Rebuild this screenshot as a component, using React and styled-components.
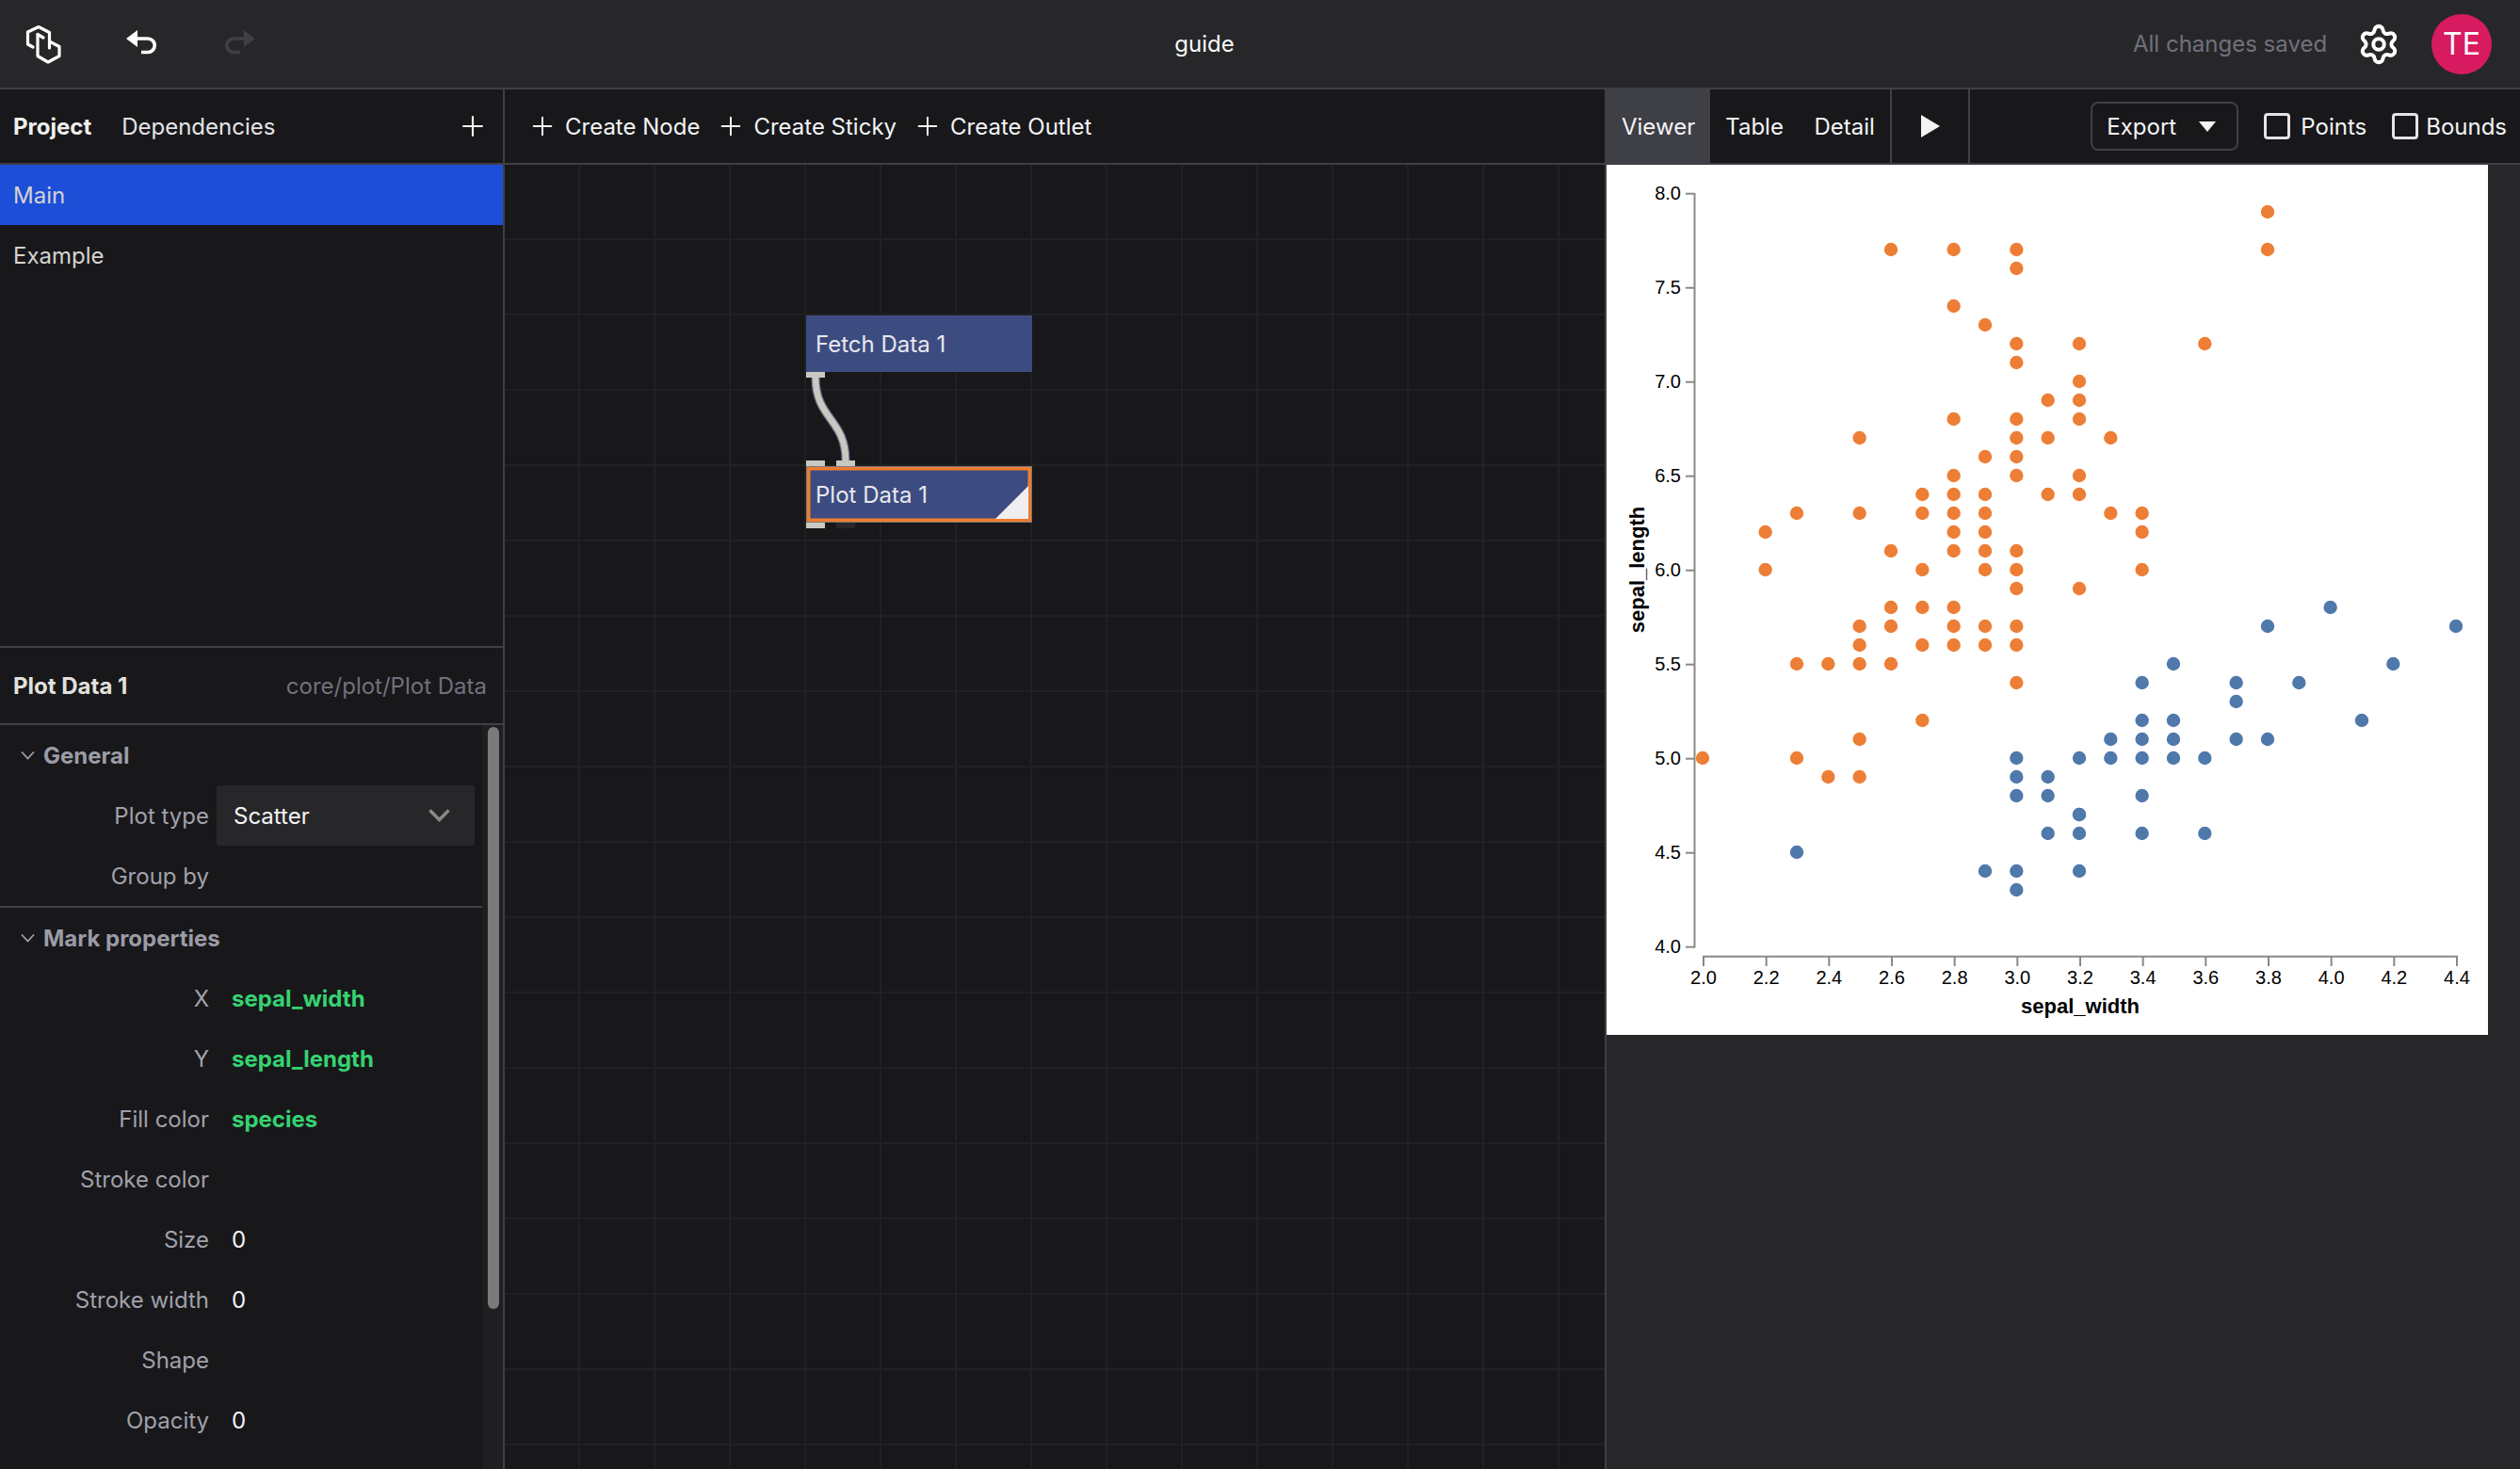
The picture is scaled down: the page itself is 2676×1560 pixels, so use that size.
import React from "react";
import styled, { createGlobalStyle } from "styled-components";
import { Plus, Settings } from "lucide-react";

const Global = createGlobalStyle`
  html, body { margin: 0; padding: 0; background: #18181b; }
  body { font-family: Inter, "Liberation Sans", sans-serif; }
  * { box-sizing: border-box; }
`;

const Shell = styled.div`
  width: 2676px; height: 1560px; display: flex; flex-direction: column; overflow: hidden;
  background: #18181b; color: #e4e4e7; font-size: 24px;
`;
const Header = styled.header`
  height: 95px; flex: none; display: flex; align-items: center; background: #27272a; border-bottom: 2px solid #3f3f46;
`;
const HeaderLeft = styled.div`
  width: 293px; padding-left: 26px; display: flex; align-items: center; gap: 67px;
`;
const Title = styled.div`flex: 1; text-align: center; color: #fafafa; font-size: 24px;`;
const HeaderRight = styled.div`
  width: 411px; padding-right: 30px; display: flex; align-items: center;
`;
const Saved = styled.span`color: #71717a; font-size: 24px; white-space: nowrap;`;
const GearWrap = styled.span`display: flex; margin-left: 32px; color: #fff;`;
const Avatar = styled.div`
  width: 64px; height: 64px; margin-left: auto; border-radius: 50%; background: #d81b60; color: #fff; font-size: 32px;
  display: flex; align-items: center; justify-content: center;
`;
const Hist = styled.svg`display: block; transform: ${p => (p.$flip ? "scaleX(-1)" : "none")};`;

const Body = styled.div`flex: 1; min-height: 0; display: flex;`;

const Left = styled.aside`
  width: 536px; flex: none; display: flex; flex-direction: column; border-right: 2px solid #3f3f46;
`;
const Bar = styled.div`
  height: 80px; flex: none; display: flex; align-items: center; border-bottom: 2px solid #3f3f46;
`;
const LeftTab = styled.span`
  font-weight: ${p => (p.$on ? 700 : 400)}; color: ${p => (p.$on ? "#f0efec" : "#e4e4e7")};
  margin-left: ${p => p.$ml}px;
`;
const AddBtn = styled.span`display: flex; margin-left: auto; margin-right: 15px; color: #f4f4f5;`;
const Pages = styled.div`flex: 1; min-height: 0;`;
const Page = styled.div`
  height: 64px; padding-left: 14px; display: flex; align-items: center; color: #d6d3d1;
  background: ${p => (p.$on ? "#1d4ed8" : "transparent")};
`;
const InspectorHead = styled.div`
  height: 84px; flex: none; padding: 0 17px 0 14px; display: flex; align-items: center; justify-content: space-between;
  border-top: 2px solid #3f3f46; border-bottom: 2px solid #3f3f46;
`;
const NodeName = styled.span`font-weight: 700; color: #e2e1dc;`;
const NodePath = styled.span`color: #71717a;`;
const InspectorBody = styled.div`flex: none; height: 790px; display: flex; overflow: hidden;`;
const Fields = styled.div`flex: 1; min-width: 0;`;
const Track = styled.div`width: 22px; flex: none; padding: 2px 4px 0 6px; background: #1f1f22;`;
const Thumb = styled.div`height: 618px; border-radius: 6px; background: #7a7a7a;`;
const SectionHead = styled.div`
  height: 64px; display: flex; align-items: center; font-weight: 700; color: #9c9ca6;
  padding-left: 22px;
`;
const Chevron = styled.svg`display: block; margin-right: 9px; flex: none;`;
const Row = styled.div`
  height: 64px; display: grid; grid-template-columns: 222px 1fr; column-gap: 8px; align-items: center;
`;
const Label = styled.span`text-align: right; color: #a1a1aa; white-space: nowrap;`;
const Value = styled.span`
  padding-left: 16px; color: ${p => (p.$bound ? "#36d271" : "#f4f4f5")}; font-weight: ${p => (p.$bound ? 700 : 400)};
`;
const Select = styled.div`
  width: 274px; height: 64px; padding: 0 26px 0 18px; display: flex; align-items: center; justify-content: space-between;
  background: #27272a; border-radius: 3px; color: #f4f4f5;
`;
const SelectArrow = styled.svg`display: block; flex: none;`;
const Divider = styled.div`height: 2px; background: #3f3f46;`;

const Center = styled.main`width: 1168px; flex: none; display: flex; flex-direction: column;`;
const CreateBtn = styled.span`
  display: flex; align-items: center; gap: 8px; color: #f4f4f5; white-space: nowrap; margin-left: ${p => p.$ml}px;
`;
const Canvas = styled.div`
  position: relative; flex: 1; min-height: 0; overflow: hidden;
  background-color: #18181b;
  background-image:
    linear-gradient(to right, #212124 2px, transparent 2px),
    linear-gradient(to bottom, #212124 2px, transparent 2px);
  background-size: 80px 80px;
  background-position: 78px 78px;
`;
const Node = styled.div`
  position: absolute; left: ${p => p.$x}px; top: ${p => p.$y}px; width: 240px; height: ${p => p.$h}px;
  background: #3d4c80; color: #e8e8ee; display: flex; align-items: center; padding-left: 10px; font-size: 24px;
  ${p => p.$sel && `border: 1px solid #7a7a7a; padding-left: 9px; box-shadow: inset 0 0 0 3.5px #ee7d2f;`}
`;
const Corner = styled.div`
  position: absolute; right: 3px; bottom: 3px; width: 35px; height: 35px; background: #efeff1;
  clip-path: polygon(100% 0, 100% 100%, 0 100%);
`;
const Port = styled.div`
  position: absolute; left: ${p => p.$x}px; top: ${p => p.$y}px; width: 20px; height: 6px;
  background: ${p => (p.$on ? "#c9c8c1" : "#27272a")};
`;
const Edge = styled.svg`position: absolute; left: 320px; top: 220px; display: block;`;

const Right = styled.section`width: 972px; flex: none; display: flex; flex-direction: column;`;
const ViewTab = styled.div`
  height: 100%; padding: 0 ${p => p.$pr}px 0 ${p => p.$pl}px; display: flex; align-items: center; color: #f4f4f5;
  background: ${p => (p.$on ? "#3f3f46" : "transparent")};
`;
const PlayCell = styled.div`
  width: 85px; height: 100%; display: flex; align-items: center; justify-content: center;
  border-left: 2px solid #3f3f46; border-right: 2px solid #3f3f46;
`;
const PlayIcon = styled.svg`display: block;`;
const ExportBtn = styled.div`
  width: 157px; height: 52px; margin-left: auto; padding: 0 22px 0 15px; display: flex; align-items: center; justify-content: space-between;
  border: 2px solid #3f3f46; border-radius: 8px; color: #f4f4f5;
`;
const Check = styled.span`
  width: 28px; height: 28px; flex: none; margin-left: ${p => p.$ml}px; margin-right: ${p => p.$mr}px;
  border: 3.5px solid #e4e4e7; border-radius: 4px;
`;
const CheckLabel = styled.span`color: #f4f4f5; margin-right: ${p => p.$mr || 0}px;`;
const Stage = styled.div`
  flex: 1; min-height: 0; background: #27272a; border-left: 2px solid #3f3f46;
`;
const Plot = styled.div`width: 936px; height: 924px; background: #fff;`;
const ChartSvg = styled.svg`display: block; font-family: "Liberation Sans", Arial, sans-serif;`;
const LogoSvg = styled.svg`display: block;`;

const setosa = "5.1,3.5 4.9,3.0 4.7,3.2 4.6,3.1 5.0,3.6 5.4,3.9 4.6,3.4 5.0,3.4 4.4,2.9 4.9,3.1 5.4,3.7 4.8,3.4 4.8,3.0 4.3,3.0 5.8,4.0 5.7,4.4 5.7,3.8 5.1,3.8 5.4,3.4 5.1,3.7 4.6,3.6 5.1,3.3 5.0,3.0 5.2,3.5 5.2,3.4 4.7,3.2 4.8,3.1 5.2,4.1 5.5,4.2 5.0,3.2 5.5,3.5 4.4,3.0 5.1,3.4 5.0,3.5 4.5,2.3 4.4,3.2 4.6,3.2 5.3,3.7 5.0,3.3";
const others = "7.0,3.2 6.4,3.2 6.9,3.1 5.5,2.3 6.5,2.8 5.7,2.8 6.3,3.3 4.9,2.4 6.6,2.9 5.2,2.7 5.0,2.0 5.9,3.0 6.0,2.2 6.1,2.9 5.6,2.9 6.7,3.1 5.6,3.0 5.8,2.7 6.2,2.2 5.6,2.5 5.9,3.2 6.1,2.8 6.3,2.5 6.4,2.9 6.6,3.0 6.8,2.8 6.7,3.0 6.0,2.9 5.7,2.6 5.5,2.4 6.0,2.7 5.4,3.0 6.0,3.4 6.3,2.3 5.5,2.5 5.5,2.6 6.1,3.0 5.8,2.6 5.0,2.3 5.6,2.7 5.7,3.0 5.7,2.9 6.2,2.9 5.1,2.5 7.1,3.0 6.3,2.9 6.5,3.0 7.6,3.0 4.9,2.5 7.3,2.9 6.7,2.5 7.2,3.6 6.5,3.2 6.4,2.7 6.8,3.0 5.7,2.5 5.8,2.8 7.7,3.8 7.7,2.6 6.9,3.2 5.6,2.8 7.7,2.8 6.3,2.7 6.7,3.3 7.2,3.2 6.2,2.8 6.4,2.8 7.2,3.0 7.4,2.8 7.9,3.8 6.3,2.8 6.1,2.6 7.7,3.0 6.3,3.4 6.4,3.1 6.0,3.0 6.8,3.2 6.2,3.4";
const parse = s => s.split(" ").map(p => p.split(",").map(Number));

const px = w => 102 + (w - 2) * 333.33;
const py = l => 630 - (l - 5) * 200;
const xTicks = [2.0, 2.2, 2.4, 2.6, 2.8, 3.0, 3.2, 3.4, 3.6, 3.8, 4.0, 4.2, 4.4];
const yTicks = [8.0, 7.5, 7.0, 6.5, 6.0, 5.5, 5.0, 4.5, 4.0];

function Chart() {
  return (
    <ChartSvg width="936" height="924" viewBox="0 0 936 924">
      <line x1="93.5" x2="93.5" y1="30" y2="831.5" stroke="#888" strokeWidth="2" />
      {yTicks.map(t => (
        <g key={t}>
          <line x1="84" x2="93" y1={py(t) + 0.7} y2={py(t) + 0.7} stroke="#888" strokeWidth="2" />
          <text x="79" y={py(t) + 7.2} textAnchor="end" fontSize="20" fill="#000">{t.toFixed(1)}</text>
        </g>
      ))}
      <line x1="102" x2="904" y1="840.7" y2="840.7" stroke="#888" strokeWidth="2" />
      {xTicks.map(t => (
        <g key={t}>
          <line x1={px(t) + 1} x2={px(t) + 1} y1="841" y2="851" stroke="#888" strokeWidth="2" />
          <text x={px(t) + 1} y="870" textAnchor="middle" fontSize="20" fill="#000">{t.toFixed(1)}</text>
        </g>
      ))}
      <text x="503" y="900.5" textAnchor="middle" fontSize="22" fontWeight="700" fill="#000">sepal_width</text>
      <text transform="translate(39.5 430) rotate(-90)" textAnchor="middle" fontSize="22" fontWeight="700" fill="#000">sepal_length</text>
      {parse(setosa).map(([l, w], i) => <circle key={`s${i}`} cx={px(w)} cy={py(l)} r="7.2" fill="#4f78ab" />)}
      {parse(others).map(([l, w], i) => <circle key={`o${i}`} cx={px(w)} cy={py(l)} r="7.2" fill="#ed7e35" />)}
    </ChartSvg>
  );
}

const Logo = () => (
  <LogoSvg width="40" height="44" viewBox="26 24 40 44" fill="none" stroke="#fff" strokeWidth="3.2" strokeLinejoin="round" strokeLinecap="round">
    <path d="M35 49 L29.5 46 V33 L41 27.5 L52.5 33.5 V43 L63 48.5 V58.5 L51 65 L40 58.5 V35.5" />
    <path d="M40 35.5 L46 39 M52.5 43 V50" />
  </LogoSvg>
);

const HistIcon = ({ color, flip }) => (
  <Hist $flip={flip} width="36" height="32" viewBox="0 0 36 32" fill="none">
    <path d="M1 10 L13 1 V19 Z" fill={color} />
    <path d="M12 10 H24 a7.25 7.25 0 0 1 0 14.5 H17" stroke={color} strokeWidth="3.6" />
  </Hist>
);

const SmallChevron = () => (
  <Chevron width="15" height="10" viewBox="0 0 15 10" fill="none" stroke="#a1a1aa" strokeWidth="1.8"><path d="M1 1.5 L7.5 8.5 L14 1.5" /></Chevron>
);

const fields = [
  ["X", "sepal_width", true],
  ["Y", "sepal_length", true],
  ["Fill color", "species", true],
  ["Stroke color", ""],
  ["Size", "0"],
  ["Stroke width", "0"],
  ["Shape", ""],
  ["Opacity", "0"],
];

export default function App() {
  return (
    <Shell>
      <Global />
      <Header>
        <HeaderLeft>
          <Logo />
          <HistIcon color="#ffffff" />
          <HistIcon color="#3f3f46" flip />
        </HeaderLeft>
        <Title>guide</Title>
        <HeaderRight>
          <Saved>All changes saved</Saved>
          <GearWrap><Settings size={46} strokeWidth={2.1} /></GearWrap>
          <Avatar>TE</Avatar>
        </HeaderRight>
      </Header>
      <Body>
        <Left>
          <Bar>
            <LeftTab $on $ml={14}>Project</LeftTab>
            <LeftTab $ml={32}>Dependencies</LeftTab>
            <AddBtn><Plus size={34} strokeWidth={1.5} /></AddBtn>
          </Bar>
          <Pages>
            <Page $on>Main</Page>
            <Page>Example</Page>
          </Pages>
          <InspectorHead>
            <NodeName>Plot Data 1</NodeName>
            <NodePath>core/plot/Plot Data</NodePath>
          </InspectorHead>
          <InspectorBody>
            <Fields>
              <SectionHead><SmallChevron />General</SectionHead>
              <Row>
                <Label>Plot type</Label>
                <Select>
                  Scatter
                  <SelectArrow width="23" height="14" viewBox="0 0 23 14" fill="none" stroke="#8a8a8a" strokeWidth="3.4"><path d="M1.5 1.5 L11.5 11.5 L21.5 1.5" /></SelectArrow>
                </Select>
              </Row>
              <Row><Label>Group by</Label></Row>
              <Divider />
              <SectionHead><SmallChevron />Mark properties</SectionHead>
              {fields.map(([l, v, b]) => (
                <Row key={l}>
                  <Label>{l}</Label>
                  <Value $bound={b}>{v}</Value>
                </Row>
              ))}
            </Fields>
            <Track><Thumb /></Track>
          </InspectorBody>
        </Left>
        <Center>
          <Bar>
            <CreateBtn $ml={24}><Plus size={32} strokeWidth={1.5} />Create Node</CreateBtn>
            <CreateBtn $ml={17}><Plus size={32} strokeWidth={1.5} />Create Sticky</CreateBtn>
            <CreateBtn $ml={17}><Plus size={32} strokeWidth={1.5} />Create Outlet</CreateBtn>
          </Bar>
          <Canvas>
            <Edge width="60" height="110" viewBox="319 220 60 110" fill="none">
              <path d="M329 226 C329 270 361 270 361 314" stroke="#6f7690" strokeWidth="9" />
              <path d="M329 226 C329 270 361 270 361 314" stroke="#c9c8c1" strokeWidth="6.5" />
            </Edge>
            <Node $x={320} $y={160} $h={60}>Fetch Data 1</Node>
            <Port $on $x={320} $y={220} />
            <Port $on $x={320} $y={314} />
            <Port $on $x={352} $y={314} />
            <Node $x={320} $y={320} $h={60} $sel>Plot Data 1<Corner /></Node>
            <Port $on $x={320} $y={380} />
            <Port $x={352} $y={380} />
          </Canvas>
        </Center>
        <Right>
          <Bar>
            <ViewTab $on $pl={18} $pr={16}>Viewer</ViewTab>
            <ViewTab $pl={16} $pr={16}>Table</ViewTab>
            <ViewTab $pl={16.5} $pr={16.5}>Detail</ViewTab>
            <PlayCell>
              <PlayIcon width="20" height="24" viewBox="0 0 20 24"><path d="M0 0 L20 12 L0 24 Z" fill="#f4f4f5" /></PlayIcon>
            </PlayCell>
            <ExportBtn>
              Export
              <PlayIcon width="18" height="11" viewBox="0 0 18 11"><path d="M0 0 H18 L9 11 Z" fill="#f4f4f5" /></PlayIcon>
            </ExportBtn>
            <Check $ml={27} $mr={11} />
            <CheckLabel>Points</CheckLabel>
            <Check $ml={27} $mr={8} />
            <CheckLabel $mr={14}>Bounds</CheckLabel>
          </Bar>
          <Stage>
            <Plot><Chart /></Plot>
          </Stage>
        </Right>
      </Body>
    </Shell>
  );
}
